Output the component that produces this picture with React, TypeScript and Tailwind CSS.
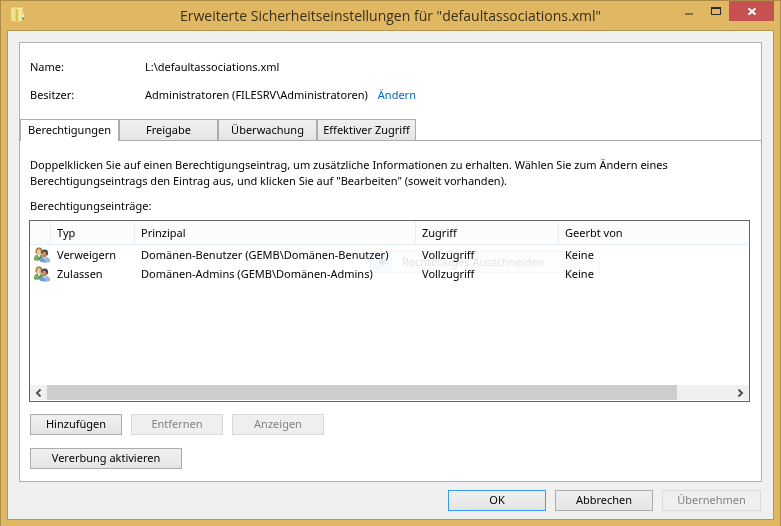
import { useState } from 'react';

const tabs = ['Berechtigungen', 'Freigabe', 'Überwachung', 'Effektiver Zugriff'];

const entries = [
  { type: 'Verweigern', principal: 'Domänen-Benutzer (GEMB\\Domänen-Benutzer)', access: 'Vollzugriff', inherited: 'Keine' },
  { type: 'Zulassen', principal: 'Domänen-Admins (GEMB\\Domänen-Admins)', access: 'Vollzugriff', inherited: 'Keine' },
];

function FolderIcon() {
  return (
    <svg width="14" height="16" viewBox="0 0 14 16" aria-hidden="true">
      <path d="M0 1.500L1 0.500h4V15L0 13.500z" fill="#f1e18c" />
      <path d="M4 0.500h7.500V14H4z" fill="#f5eb9c" />
      <path d="M4.500 1l2.500 1.500V16l-2.500-1.500z" fill="#d9c355" />
      <path d="M7 2.500L8 2v13l-1 1z" fill="#ecdc84" />
      <path d="M10.500 2h1v12h-1z" fill="#e0cb66" />
      <path d="M11.500 5h1v3h-1z" fill="#f6eab0" />
      <path d="M11.500 8H13v2h-1.500z" fill="#eaf6fb" />
      <path d="M11.500 10H13v3h-1.500z" fill="#3f9fd6" />
    </svg>
  );
}

function UsersIcon() {
  return (
    <svg width="16" height="16" viewBox="0 0 16 16" className="block" aria-hidden="true">
      <path d="M0 13c0-4 1.200-5.500 4.500-5.500S9 9 9 13.500H1z" fill="#5c9a50" />
      <path d="M1 12c0-2.500.6-3.600 2-4l1 5.500H1z" fill="#7db56d" />
      <path d="M3.500 7.500L5 11l1.500-3.500z" fill="#eef3e4" />
      <path d="M1.600 6.500C1.200 2 2.500.4 5 .4s3.800 1.600 3.400 6.100z" fill="#94733a" />
      <ellipse cx="4.800" cy="4.900" rx="2.100" ry="2.900" fill="#ecc899" />
      <path d="M2.600 3.600C3.500 1.500 6 1.500 7 3.600L6.500 2 5 1.200 3.300 2z" fill="#b8964f" />
      <path d="M6 14.500c0-3.400 1.600-4.500 4.700-4.500s5.300 1.200 5.300 4.500c-2 1.500-8 1.500-10 0z" fill="#6f9fdc" />
      <path d="M11 11c2.500-.6 4.400.5 4.500 3.200-1 .8-2.500 1-4 1z" fill="#94baeb" />
      <path d="M9 10l1.500 2.600L12.200 10z" fill="#f5f8fd" />
      <path d="M7.300 6.500C7 3.600 8.500 2.400 10.600 2.400s3.900 1.200 3.500 4.600l-.8 1.500H8z" fill="#4a4542" />
      <ellipse cx="10.300" cy="7.500" rx="2.300" ry="2.900" fill="#b97f58" />
      <ellipse cx="9.700" cy="7" rx="1.100" ry="1.800" fill="#cf9a72" />
    </svg>
  );
}

function Chevron({ d }: { d: string }) {
  return (
    <svg width="7" height="8" viewBox="0 0 7 8" aria-hidden="true">
      <path d={d} fill="none" stroke="#505050" strokeWidth="2" />
    </svg>
  );
}

function DialogButton({ label, disabled, primary, className }: { label: string; disabled?: boolean; primary?: boolean; className: string }) {
  const color = disabled
    ? 'border-[#d9d9d9] bg-[#efefef] text-[#838383]'
    : primary
      ? 'border-[#3399ff] bg-linear-to-b from-[#f0f0f0] to-[#e5e5e5]'
      : 'border-[#acacac] bg-linear-to-b from-[#f0f0f0] to-[#e5e5e5]';
  return (
    <button type="button" disabled={disabled} className={`h-[21px] border pb-px leading-4 ${color} ${className}`}>
      {label}
    </button>
  );
}

export default function App() {
  const [activeTab, setActiveTab] = useState('Berechtigungen');

  return (
    <div className="flex min-h-screen flex-col border border-b-0 border-[#ad8c49] bg-[#e0b763] px-[6px] pb-[6px] font-['Noto_Sans',sans-serif] text-[11px] leading-4 text-black">
      <header className="flex h-[29px] items-start">
        <div className="w-[99px] pt-[6px] pl-1">
          <FolderIcon />
        </div>
        <h1 className="flex-1 pt-[5px] text-center font-['Open_Sans',sans-serif] text-[14px] leading-5 whitespace-nowrap text-[#3a2f1a]">
          Erweiterte Sicherheitseinstellungen für "defaultassociations.xml"
        </h1>
        <div className="flex">
          <button type="button" aria-label="Minimieren" className="flex h-5 w-7 items-start justify-center pt-3">
            <span className="h-[2px] w-2 bg-[#857045]" />
          </button>
          <button type="button" aria-label="Maximieren" className="flex h-5 w-[26px] items-start justify-center pt-[6px]">
            <span className="h-2 w-[10px] border border-t-2 border-[#2a2a2a]" />
          </button>
          <button type="button" aria-label="Schließen" className="flex h-5 w-[45px] items-center justify-center bg-[#c75050]">
            <svg width="8" height="7" viewBox="0 0 8 7" aria-hidden="true">
              <path d="M0.500 0.300L7.500 6.700M7.500 0.300L0.500 6.700" stroke="#fff" strokeWidth="1.900" />
            </svg>
          </button>
        </div>
      </header>

      <main className="flex flex-1 flex-col border border-[#b8964f] bg-[#f0f0f0] p-[11px] pb-2">
        <section className="flex-1 border border-[#b0b0b0] bg-white">
          <dl className="grid grid-cols-[115px_1fr] gap-y-3 px-[10px] pt-4 pb-4">
            <dt>Name:</dt>
            <dd>L:\defaultassociations.xml</dd>
            <dt>Besitzer:</dt>
            <dd>
              Administratoren (FILESRV\Administratoren)
              <a href="#owner" className="ml-[10px] text-[#0066cc]">Ändern</a>
            </dd>
          </dl>

          <div role="tablist" className="flex border-b border-[#acacac]">
            {tabs.map((tab) => (
              <button
                key={tab}
                type="button"
                role="tab"
                aria-selected={tab === activeTab}
                onClick={() => setActiveTab(tab)}
                className={
                  tab === activeTab
                    ? '-mb-px h-[22px] w-[99px] border border-b-0 border-[#acacac] bg-white pb-[2px] whitespace-nowrap'
                    : 'h-[21px] w-[99px] border border-b-0 border-[#acacac] bg-linear-to-b from-[#f0f0f0] to-[#e5e5e5] whitespace-nowrap'
                }
              >
                {tab}
              </button>
            ))}
          </div>

          <div className="px-[10px] pt-4">
            <p>
              Doppelklicken Sie auf einen Berechtigungseintrag, um zusätzliche Informationen zu erhalten. Wählen Sie zum Ändern eines
              <br />
              Berechtigungseintrags den Eintrag aus, und klicken Sie auf "Bearbeiten" (soweit vorhanden).
            </p>
            <p className="mt-[9px]">Berechtigungseinträge:</p>
          </div>

          <div className="mr-[11px] ml-[9px] mt-[6px] flex h-[182px] flex-col border border-[#646464] pb-px">
            <div className="relative flex-1">
              <table className="w-full table-fixed border-separate border-spacing-0 text-left">
                <colgroup>
                  <col className="w-[21px]" />
                  <col className="w-[84px]" />
                  <col className="w-[281px]" />
                  <col className="w-[143px]" />
                  <col />
                </colgroup>
                <thead className="bg-[#fcfcfc]">
                  <tr className="h-6">
                    <th className="border-r border-b border-[#e5effb]" />
                    <th className="border-r border-b border-[#e5effb] pl-[6px] font-normal">Typ</th>
                    <th className="border-r border-b border-[#e5effb] pl-[6px] font-normal">Prinzipal</th>
                    <th className="border-r border-b border-[#e5effb] pl-[6px] font-normal">Zugriff</th>
                    <th className="border-b border-[#e5effb] pl-[6px] font-normal">Geerbt von</th>
                  </tr>
                </thead>
                <tbody>
                  {entries.map((entry) => (
                    <tr key={entry.type} className="h-[19px] whitespace-nowrap">
                      <td className="pl-1"><UsersIcon /></td>
                      <td className="pl-[6px]">{entry.type}</td>
                      <td className="pl-[6px]">{entry.principal}</td>
                      <td className="pl-[6px]">{entry.access}</td>
                      <td className="pl-[6px]">{entry.inherited}</td>
                    </tr>
                  ))}
                </tbody>
              </table>

              {/* menu item fading out over the list */}
              <div className="pointer-events-none absolute top-[30px] left-[340px] flex h-[22px] w-[230px] items-center border border-[#f3f8fd] mix-blend-multiply">
                <span className="flex h-full w-[21px] items-center justify-center bg-[#f5fafe]">
                  <span className="size-[6px] rounded-full bg-[#e8e8e8]" />
                </span>
                <span className="h-full flex-1 bg-[#fcfdff] pl-[10px] leading-5 text-[#e4e4e4]">Rechteckiges Ausschneiden</span>
              </div>
            </div>
            <div className="flex h-[15px] bg-[#f0f0f0]">
              <button type="button" aria-label="Nach links" className="flex w-[17px] items-center justify-center">
                <Chevron d="M5.500 0.500L2 4l3.500 3.500" />
              </button>
              <div className="flex-1">
                <div className="h-full w-[92%] bg-[#cdcdcd]" />
              </div>
              <button type="button" aria-label="Nach rechts" className="flex w-[17px] items-center justify-center">
                <Chevron d="M1.500 0.500L5 4L1.500 7.500" />
              </button>
            </div>
          </div>

          <div className="flex flex-col gap-[13px] px-[10px] py-3">
            <div className="flex gap-[9px]">
              <DialogButton label="Hinzufügen" className="w-[92px]" />
              <DialogButton label="Entfernen" disabled className="w-[92px]" />
              <DialogButton label="Anzeigen" disabled className="w-[92px]" />
            </div>
            <DialogButton label="Vererbung aktivieren" className="w-[152px]" />
          </div>
        </section>

        <footer className="mt-2 flex justify-end gap-[9px] pr-px">
          <DialogButton label="OK" primary className="w-[98px]" />
          <DialogButton label="Abbrechen" className="w-[98px]" />
          <DialogButton label="Übernehmen" disabled className="w-[99px]" />
        </footer>
      </main>
    </div>
  );
}
